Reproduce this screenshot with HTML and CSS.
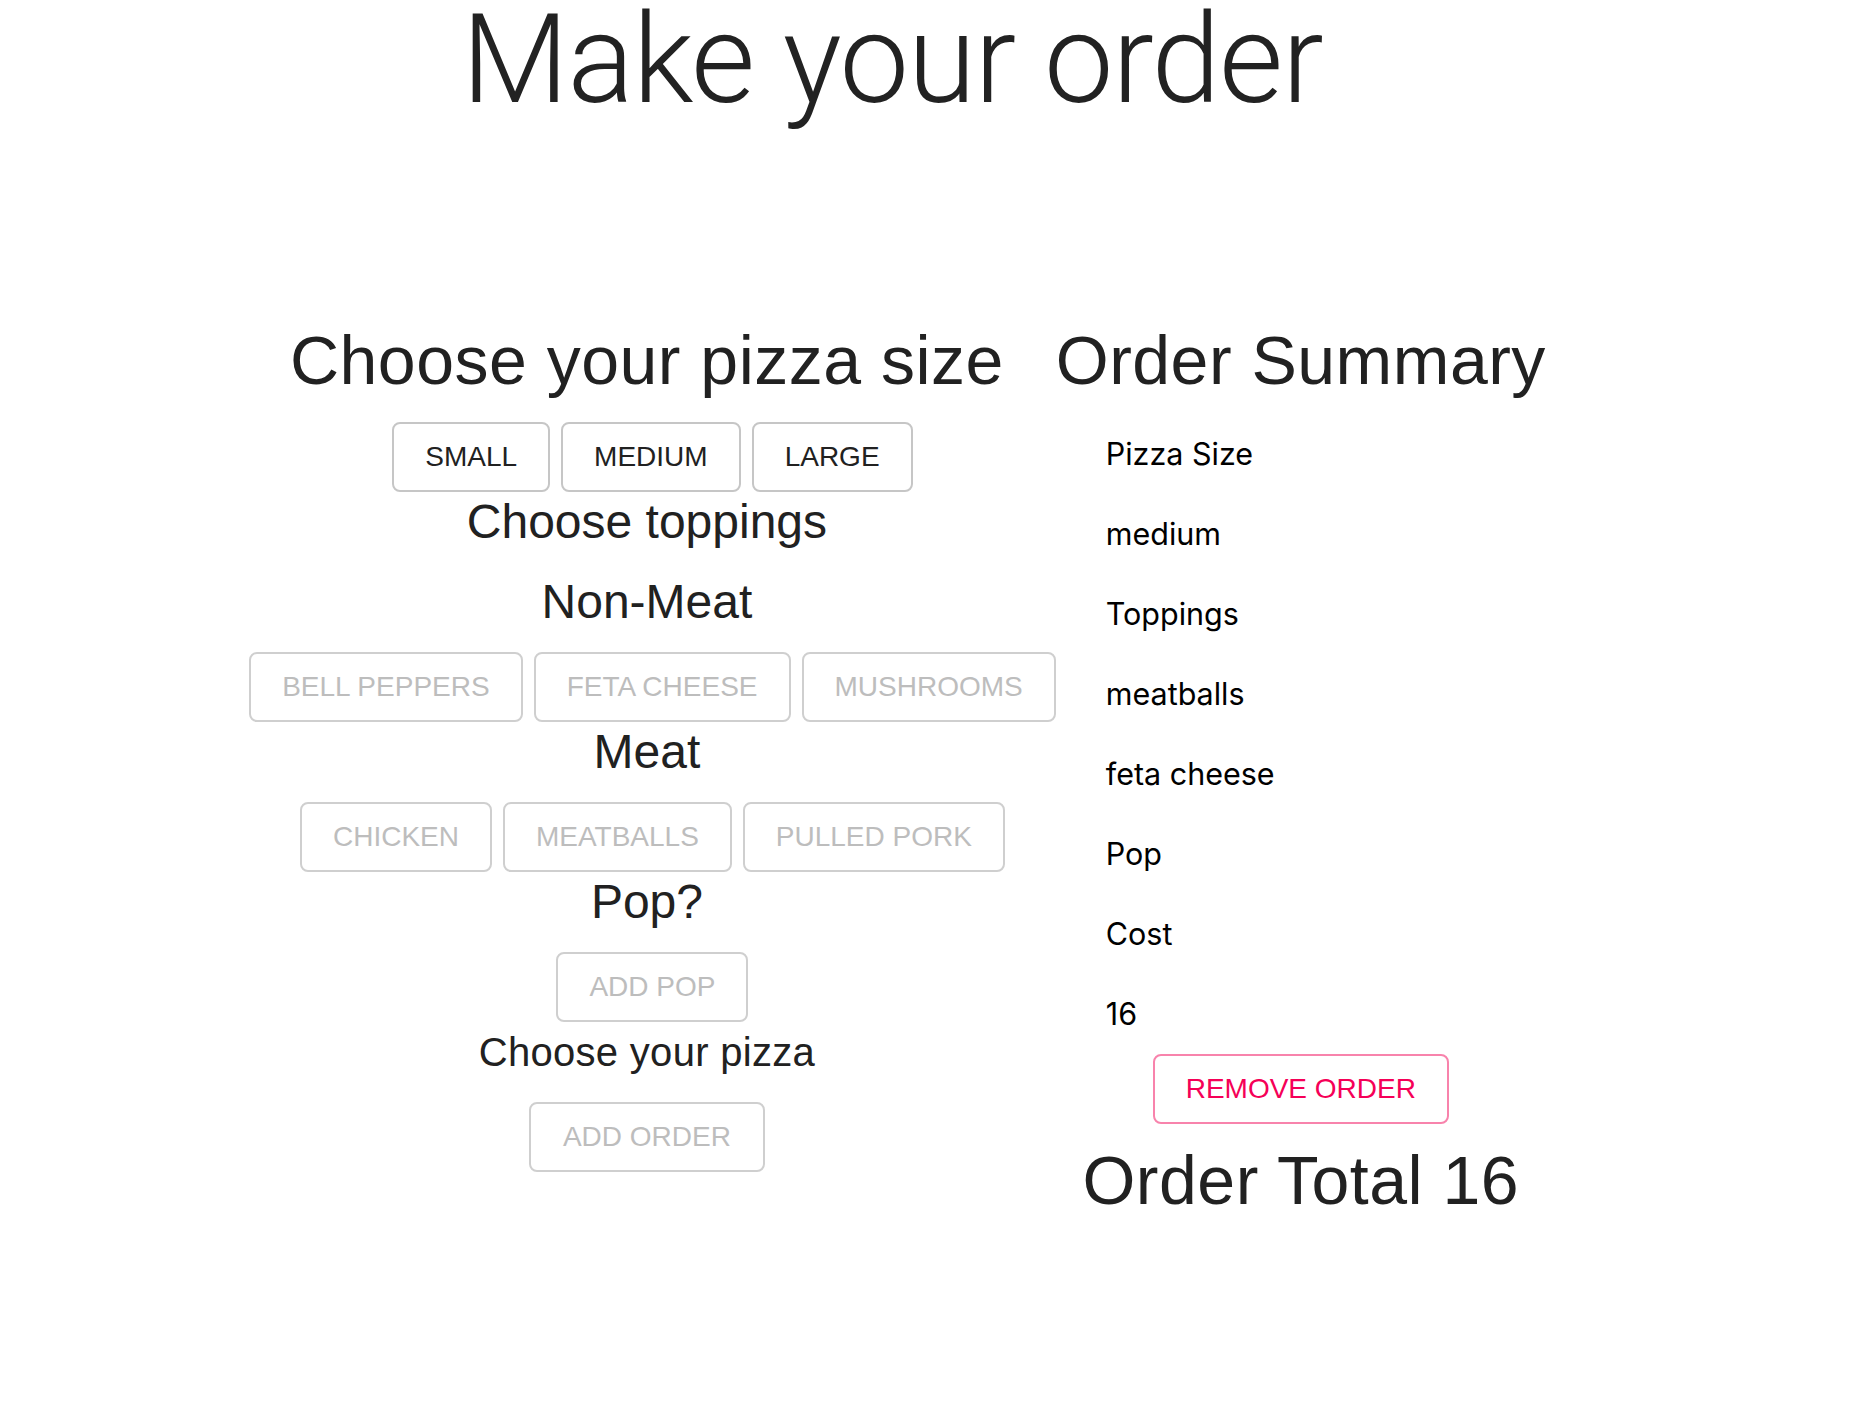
FILE: index.html
```html
<!DOCTYPE html>
<html lang="en">
<head>
<meta charset="utf-8">
<title>Make your order</title>
<link rel="stylesheet" href="styles.css">
</head>
<body>
<div class="page">
  <h1 class="title">Make your order</h1>
  <div class="columns">
    <section class="builder">
      <h2 class="h4">Choose your pizza size</h2>
      <div class="btn-row">
        <button class="btn">Small</button>
        <button class="btn">Medium</button>
        <button class="btn">Large</button>
      </div>
      <h3 class="h5">Choose toppings</h3>
      <h3 class="h5 spaced">Non-Meat</h3>
      <div class="btn-row">
        <button class="btn" disabled>Bell Peppers</button>
        <button class="btn" disabled>Feta Cheese</button>
        <button class="btn" disabled>Mushrooms</button>
      </div>
      <h3 class="h5">Meat</h3>
      <div class="btn-row">
        <button class="btn" disabled>Chicken</button>
        <button class="btn" disabled>Meatballs</button>
        <button class="btn" disabled>Pulled Pork</button>
      </div>
      <h3 class="h5">Pop?</h3>
      <div class="btn-row">
        <button class="btn" disabled>Add Pop</button>
      </div>
      <h3 class="h6">Choose your pizza</h3>
      <div class="btn-row">
        <button class="btn btn-plain" disabled>Add Order</button>
      </div>
    </section>
    <section class="summary">
      <h2 class="h4">Order Summary</h2>
      <ul class="items">
        <li>Pizza Size</li>
        <li>medium</li>
        <li>Toppings</li>
        <li>meatballs</li>
        <li>feta cheese</li>
        <li>Pop</li>
        <li>Cost</li>
        <li>16</li>
      </ul>
      <button class="btn btn-danger">Remove Order</button>
      <h2 class="h4 total">Order Total 16</h2>
    </section>
  </div>
</div>
</body>
</html>
```

FILE: styles.css
```css
html, body {
  margin: 0;
  padding: 0;
  background: #ffffff;
}

body {
  font-family: "Liberation Sans", Arial, sans-serif;
  color: #212121;
}

.page {
  width: 1784px;
}

.title {
  margin: 0;
  font-family: "Roboto", "Liberation Sans", sans-serif;
  font-weight: 300;
  font-size: 124px;
  line-height: 120px;
  letter-spacing: -1.3px;
  text-align: center;
  color: #222222;
}

.columns {
  display: flex;
  justify-content: center;
  align-items: flex-start;
  margin-top: 198px;
}

.builder,
.summary {
  display: flex;
  flex-direction: column;
  align-items: center;
}

.h4 {
  margin: 0;
  font-size: 68px;
  font-weight: 400;
  line-height: 84px;
  letter-spacing: 0.5px;
  white-space: nowrap;
}

.h5 {
  margin: 0;
  font-size: 48px;
  font-weight: 400;
  line-height: 60px;
  white-space: nowrap;
}

.h5.spaced {
  margin-top: 20px;
}

.h6 {
  margin: 0;
  font-size: 40px;
  font-weight: 400;
  line-height: 60px;
  letter-spacing: 0.3px;
  white-space: nowrap;
}

.btn-row {
  display: flex;
  justify-content: center;
  margin-top: 20px;
}

.btn {
  margin: 0 0 0 11px;
  padding: 14px 31px;
  border: 2px solid #c6c6c6;
  border-radius: 8px;
  background: #ffffff;
  font-family: "Liberation Sans", Arial, sans-serif;
  font-size: 28px;
  line-height: 38px;
  text-transform: uppercase;
  color: #212121;
  white-space: nowrap;
}

.btn:disabled {
  color: #bdbdbd;
  border-color: #cfcfcf;
}

.btn-plain {
  margin-left: 0;
  padding: 14px 32px;
}

.summary {
  align-self: stretch;
}

.items {
  list-style: none;
  margin: 12px 0 0 0;
  padding: 0 0 0 50px;
  align-self: stretch;
  font-family: "Inter", "Noto Sans", sans-serif;
  font-size: 30.5px;
  line-height: 48px;
  color: #000000;
}

.items li {
  padding: 16px 0;
}

.btn-danger {
  margin: 0;
  color: #f50057;
  border-color: #f883ac;
}

.total {
  margin-top: 14px;
}
```
